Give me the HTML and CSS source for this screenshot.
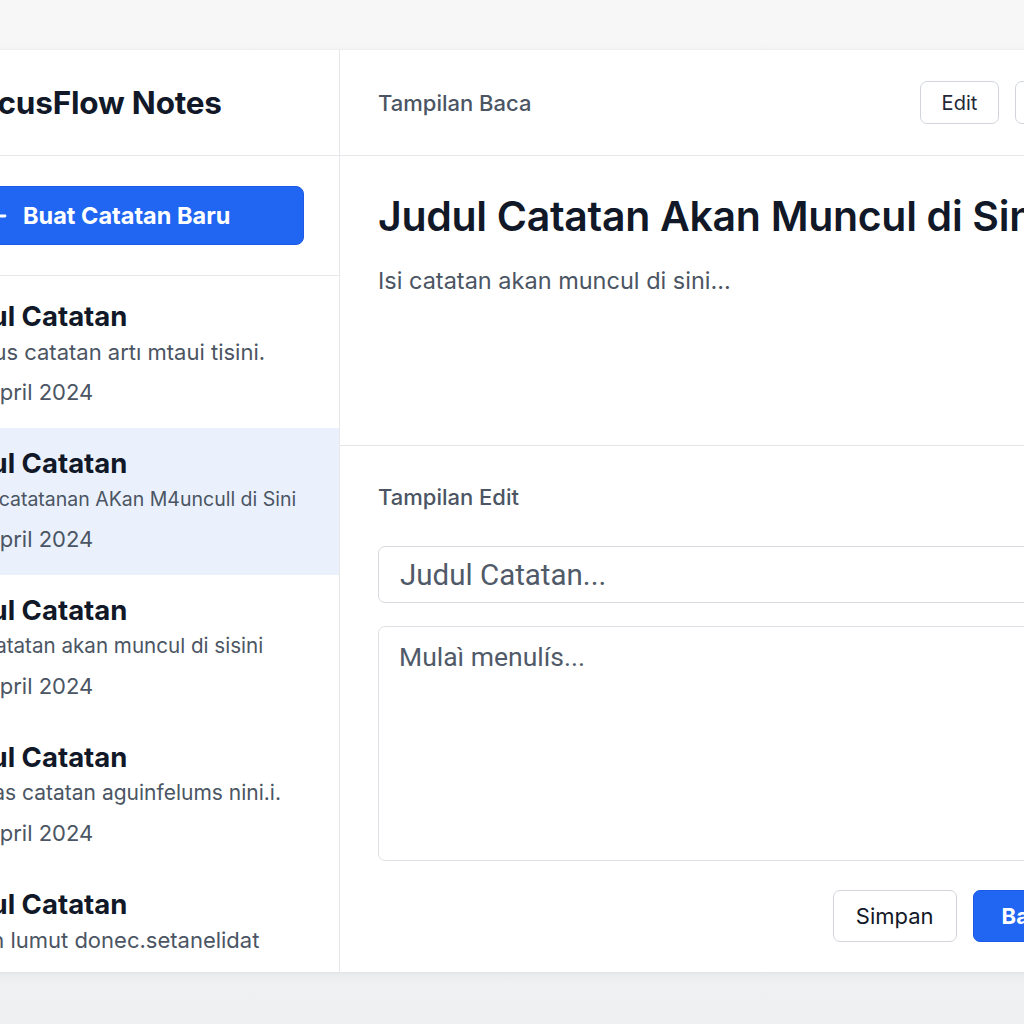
FILE: index.html
```html
<!DOCTYPE html>
<html lang="id">
<head>
<meta charset="utf-8">
<title>FocusFlow Notes</title>
<link rel="stylesheet" href="styles.css">
</head>
<body>
<div class="app">
  <aside class="sidebar">
    <div class="brand"><h1>FocusFlow Notes</h1></div>
    <div class="new-area">
      <button class="btn-new">
        <svg class="plus" viewBox="0 0 24 24" width="24" height="24"><path d="M12 2v20M2 12h20" stroke="#fff" stroke-width="2.8" stroke-linecap="round"/></svg>
        <span>Buat Catatan Baru</span>
      </button>
    </div>
    <ul class="note-list">
      <li class="note">
        <div class="note-title">Judul Catatan</div>
        <div class="note-snippet">Fokus catatan artı mtaui tisini.</div>
        <div class="note-date">12 April 2024</div>
      </li>
      <li class="note active">
        <div class="note-title">Judul Catatan</div>
        <div class="note-snippet narrow">Bila catatanan AKan M4uncull di Sini</div>
        <div class="note-date">12 April 2024</div>
      </li>
      <li class="note">
        <div class="note-title">Judul Catatan</div>
        <div class="note-snippet mid-sm">Isi catatan akan muncul di sisini</div>
        <div class="note-date">12 April 2024</div>
      </li>
      <li class="note">
        <div class="note-title">Judul Catatan</div>
        <div class="note-snippet mid">Tugas catatan aguinfelums nini.i.</div>
        <div class="note-date">12 April 2024</div>
      </li>
      <li class="note">
        <div class="note-title">Judul Catatan</div>
        <div class="note-snippet">Isian lumut donec.setanelidat</div>
      </li>
    </ul>
  </aside>
  <main class="main">
    <header class="main-header">
      <span class="section-label">Tampilan Baca</span>
      <div class="actions">
        <button class="btn-outline small">Edit</button>
        <button class="btn-outline small">Hapus</button>
      </div>
    </header>
    <section class="read">
      <h2 class="read-title">Judul Catatan Akan Muncul di Sini</h2>
      <p class="read-body">Isi catatan akan muncul di sini...</p>
    </section>
    <section class="edit">
      <div class="section-label">Tampilan Edit</div>
      <input class="field-title" type="text" placeholder="Judul Catatan...">
      <textarea class="field-body" placeholder="Mulaì menulís..."></textarea>
      <div class="edit-actions">
        <button class="btn-outline">Simpan</button>
        <button class="btn-primary">Bagikan</button>
      </div>
    </section>
  </main>
</div>
</body>
</html>
```
FILE: styles.css
```css
* { box-sizing: border-box; }
html, body { margin: 0; padding: 0; }
body {
  background: linear-gradient(#f7f7f8, #eff0f2);
  font-family: "Inter", "Noto Sans", sans-serif;
  color: #111827;
  width: 1024px;
  height: 1024px;
  overflow: hidden;
}
.app {
  display: flex;
  margin-top: 50px;
  margin-left: -64px;
  width: 1219px;
  height: 922px;
  background: #fff;
  box-shadow: 0 2px 10px rgba(0,0,0,0.06), 0 0 1px rgba(0,0,0,0.08);
}
.sidebar {
  width: 404px;
  flex-shrink: 0;
  border-right: 1px solid #e5e7eb;
  display: flex;
  flex-direction: column;
  overflow: hidden;
}
.brand {
  height: 106px;
  flex-shrink: 0;
  border-bottom: 1px solid #e5e7eb;
  display: flex;
  align-items: center;
  padding-left: 25px;
}
.brand h1 {
  margin: 0;
  font-size: 31.5px;
  font-weight: 700;
  letter-spacing: -0.2px;
  color: #111827;
}
.new-area {
  flex-shrink: 0;
  padding: 30px 35px 30px 24px;
  border-bottom: 1px solid #e5e7eb;
}
.btn-new {
  width: 100%;
  height: 59px;
  display: flex;
  align-items: center;
  gap: 16px;
  padding: 0 0 0 22px;
  background: #2166f3;
  border: 1px solid #1a5ae6;
  border-radius: 8px;
  color: #fff;
  font-family: "Inter", sans-serif;
  font-size: 23.5px;
  font-weight: 700;
}
.plus { flex-shrink: 0; }
.note-list {
  list-style: none;
  margin: 0;
  padding: 5px 0 0;
  flex-shrink: 0;
}
.note {
  height: 147px;
  padding: 19px 24px 20px 20px;
}
.note.active { background: #eaf1fd; }
.note-title {
  margin-left: -16px;
  font-size: 27.5px;
  line-height: 32px;
  font-weight: 700;
  color: #111827;
}
.note-snippet {
  margin-top: 6px;
  font-size: 22px;
  line-height: 28px;
  color: #4b5563;
  white-space: nowrap;
}
.note-snippet.narrow { font-size: 19.5px; margin-left: 4px; }
.note-snippet.mid { font-size: 21px; }
.note-snippet.mid-sm { font-size: 20.6px; }
.note-date {
  margin-top: 12px;
  font-size: 22px;
  line-height: 28px;
  color: #4b5563;
}
.main {
  flex: 1;
  display: flex;
  flex-direction: column;
  min-width: 0;
}
.main-header {
  height: 106px;
  flex-shrink: 0;
  border-bottom: 1px solid #e5e7eb;
  display: flex;
  align-items: center;
  justify-content: space-between;
  padding: 0 35px 0 38px;
}
.section-label {
  font-size: 22px;
  font-weight: 500;
  color: #4b5563;
  line-height: 28px;
}
.actions { display: flex; gap: 16px; }
.btn-outline {
  height: 52px;
  padding: 0 22px;
  background: #fff;
  border: 1px solid #d1d5db;
  border-radius: 7px;
  font-family: "Inter", sans-serif;
  font-size: 22px;
  color: #111827;
}
.btn-outline.small {
  height: 43px;
  font-size: 20px;
  padding: 0 21px;
  color: #1f2937;
}
.read {
  height: 290px;
  flex-shrink: 0;
  border-bottom: 1px solid #e5e7eb;
  padding: 35px 38px 0;
}
.read-title {
  margin: 0;
  font-size: 41px;
  line-height: 50px;
  font-weight: 600;
  letter-spacing: -0.3px;
  color: #111827;
  white-space: nowrap;
}
.read-body {
  margin: 26px 0 0;
  font-size: 23.5px;
  line-height: 28px;
  color: #4b5563;
}
.edit {
  flex: 1;
  display: flex;
  flex-direction: column;
  padding: 37px 38px 30px;
}
.field-title {
  margin-top: 35px;
  height: 57px;
  width: 100%;
  border: 1px solid #d6d9de;
  border-radius: 7px;
  padding: 0 21px;
  font-family: "Roboto", sans-serif;
  font-size: 29.5px;
  font-weight: 400;
  color: #111827;
}
.field-body {
  margin-top: 23px;
  height: 235px;
  width: 100%;
  border: 1px solid #dde0e4;
  border-radius: 7px;
  padding: 14px 20px;
  font-family: "Roboto", sans-serif;
  font-size: 26.5px;
  font-weight: 400;
  resize: none;
}
.field-title::placeholder,
.field-body::placeholder { color: #505a68; opacity: 1; }
.edit-actions {
  margin-top: 29px;
  display: flex;
  justify-content: flex-end;
  gap: 16px;
}
.btn-primary {
  height: 52px;
  padding: 0 28px;
  background: #2166f3;
  border: 1px solid #1a5ae6;
  border-radius: 7px;
  color: #fff;
  font-family: "Inter", sans-serif;
  font-size: 22px;
  font-weight: 700;
}
```
